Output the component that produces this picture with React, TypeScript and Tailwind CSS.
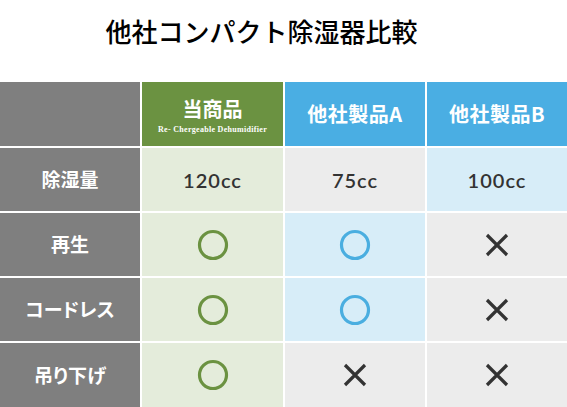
import React from 'react';

type Mark = 'o-green' | 'o-blue' | 'x' | string;
type Tone = 'green' | 'blue' | 'gray';

const font = { fontFamily: '"Noto Sans CJK JP", "Noto Sans", sans-serif' };

const Circle = ({ color }: { color: string }) => (
  <svg width="32" height="32" viewBox="0 0 32 32">
    <circle cx="16" cy="16" r="13.5" fill="none" stroke={color} strokeWidth="3.2" />
  </svg>
);

const Cross = () => (
  <svg width="24" height="24" viewBox="0 0 24 24">
    <path d="M2 2 L22 22 M22 2 L2 22" stroke="#333333" strokeWidth="3.2" fill="none" />
  </svg>
);

const toneBg: Record<Tone, string> = {
  green: 'bg-[#e4ecdb]',
  blue: 'bg-[#d7edf8]',
  gray: 'bg-[#ececec]',
};

function Cell({ mark, tone }: { mark: Mark; tone: Tone }) {
  let content: React.ReactNode;
  if (mark === 'o-green') content = <Circle color="#6b9241" />;
  else if (mark === 'o-blue') content = <Circle color="#4aaee0" />;
  else if (mark === 'x') content = <Cross />;
  else
    content = (
      <span className="text-[20px] font-semibold tracking-[1px] text-[#333333]" style={{ fontFamily: 'Lato, "Noto Sans", sans-serif' }}>
        {mark}
      </span>
    );
  return <div className={`flex items-center justify-center ${toneBg[tone]}`}>{content}</div>;
}

const rows: { label: string; cells: [Mark, Tone][] }[] = [
  { label: '除湿量', cells: [['120cc', 'green'], ['75cc', 'gray'], ['100cc', 'blue']] },
  { label: '再生', cells: [['o-green', 'green'], ['o-blue', 'blue'], ['x', 'gray']] },
  { label: 'コードレス', cells: [['o-green', 'green'], ['o-blue', 'blue'], ['x', 'gray']] },
  { label: '吊り下げ', cells: [['o-green', 'green'], ['x', 'gray'], ['x', 'gray']] },
];

export default function App() {
  return (
    <div className="w-[567px] h-[407px] bg-white overflow-hidden" style={font}>
      <h1 className="h-[82px] pb-[22px] pr-[44px] flex items-center justify-center text-[26px] font-medium text-black">
        他社コンパクト除湿器比較
      </h1>
      <div className="grid grid-cols-[140px_141px_140px_140px] grid-rows-[64px_63px_63px_63px_64px] gap-[2px]">
        <div className="bg-[#7f7f7f]" />
        <div className="bg-[#6b9241] flex flex-col items-center justify-center text-white pt-[4px]">
          <span className="text-[20px] font-bold leading-[22px]">当商品</span>
          <span className="text-[8px] font-bold leading-[10px] mt-[5px] tracking-[0.3px]" style={{ fontFamily: '"Liberation Serif", serif' }}>
            Re- Chergeable Dehumidifier
          </span>
        </div>
        <div className="bg-[#4aaee3] flex items-center justify-center text-white text-[20px] font-bold tracking-[0.5px]">他社製品A</div>
        <div className="bg-[#4aaee3] flex items-center justify-center text-white text-[20px] font-bold tracking-[0.5px]">他社製品B</div>
        {rows.map((r) => (
          <React.Fragment key={r.label}>
            <div className="bg-[#7f7f7f] flex items-center justify-center text-white text-[19px] font-bold [font-feature-settings:'palt']">{r.label}</div>
            {r.cells.map(([m, t], i) => (
              <Cell key={i} mark={m} tone={t} />
            ))}
          </React.Fragment>
        ))}
      </div>
    </div>
  );
}
